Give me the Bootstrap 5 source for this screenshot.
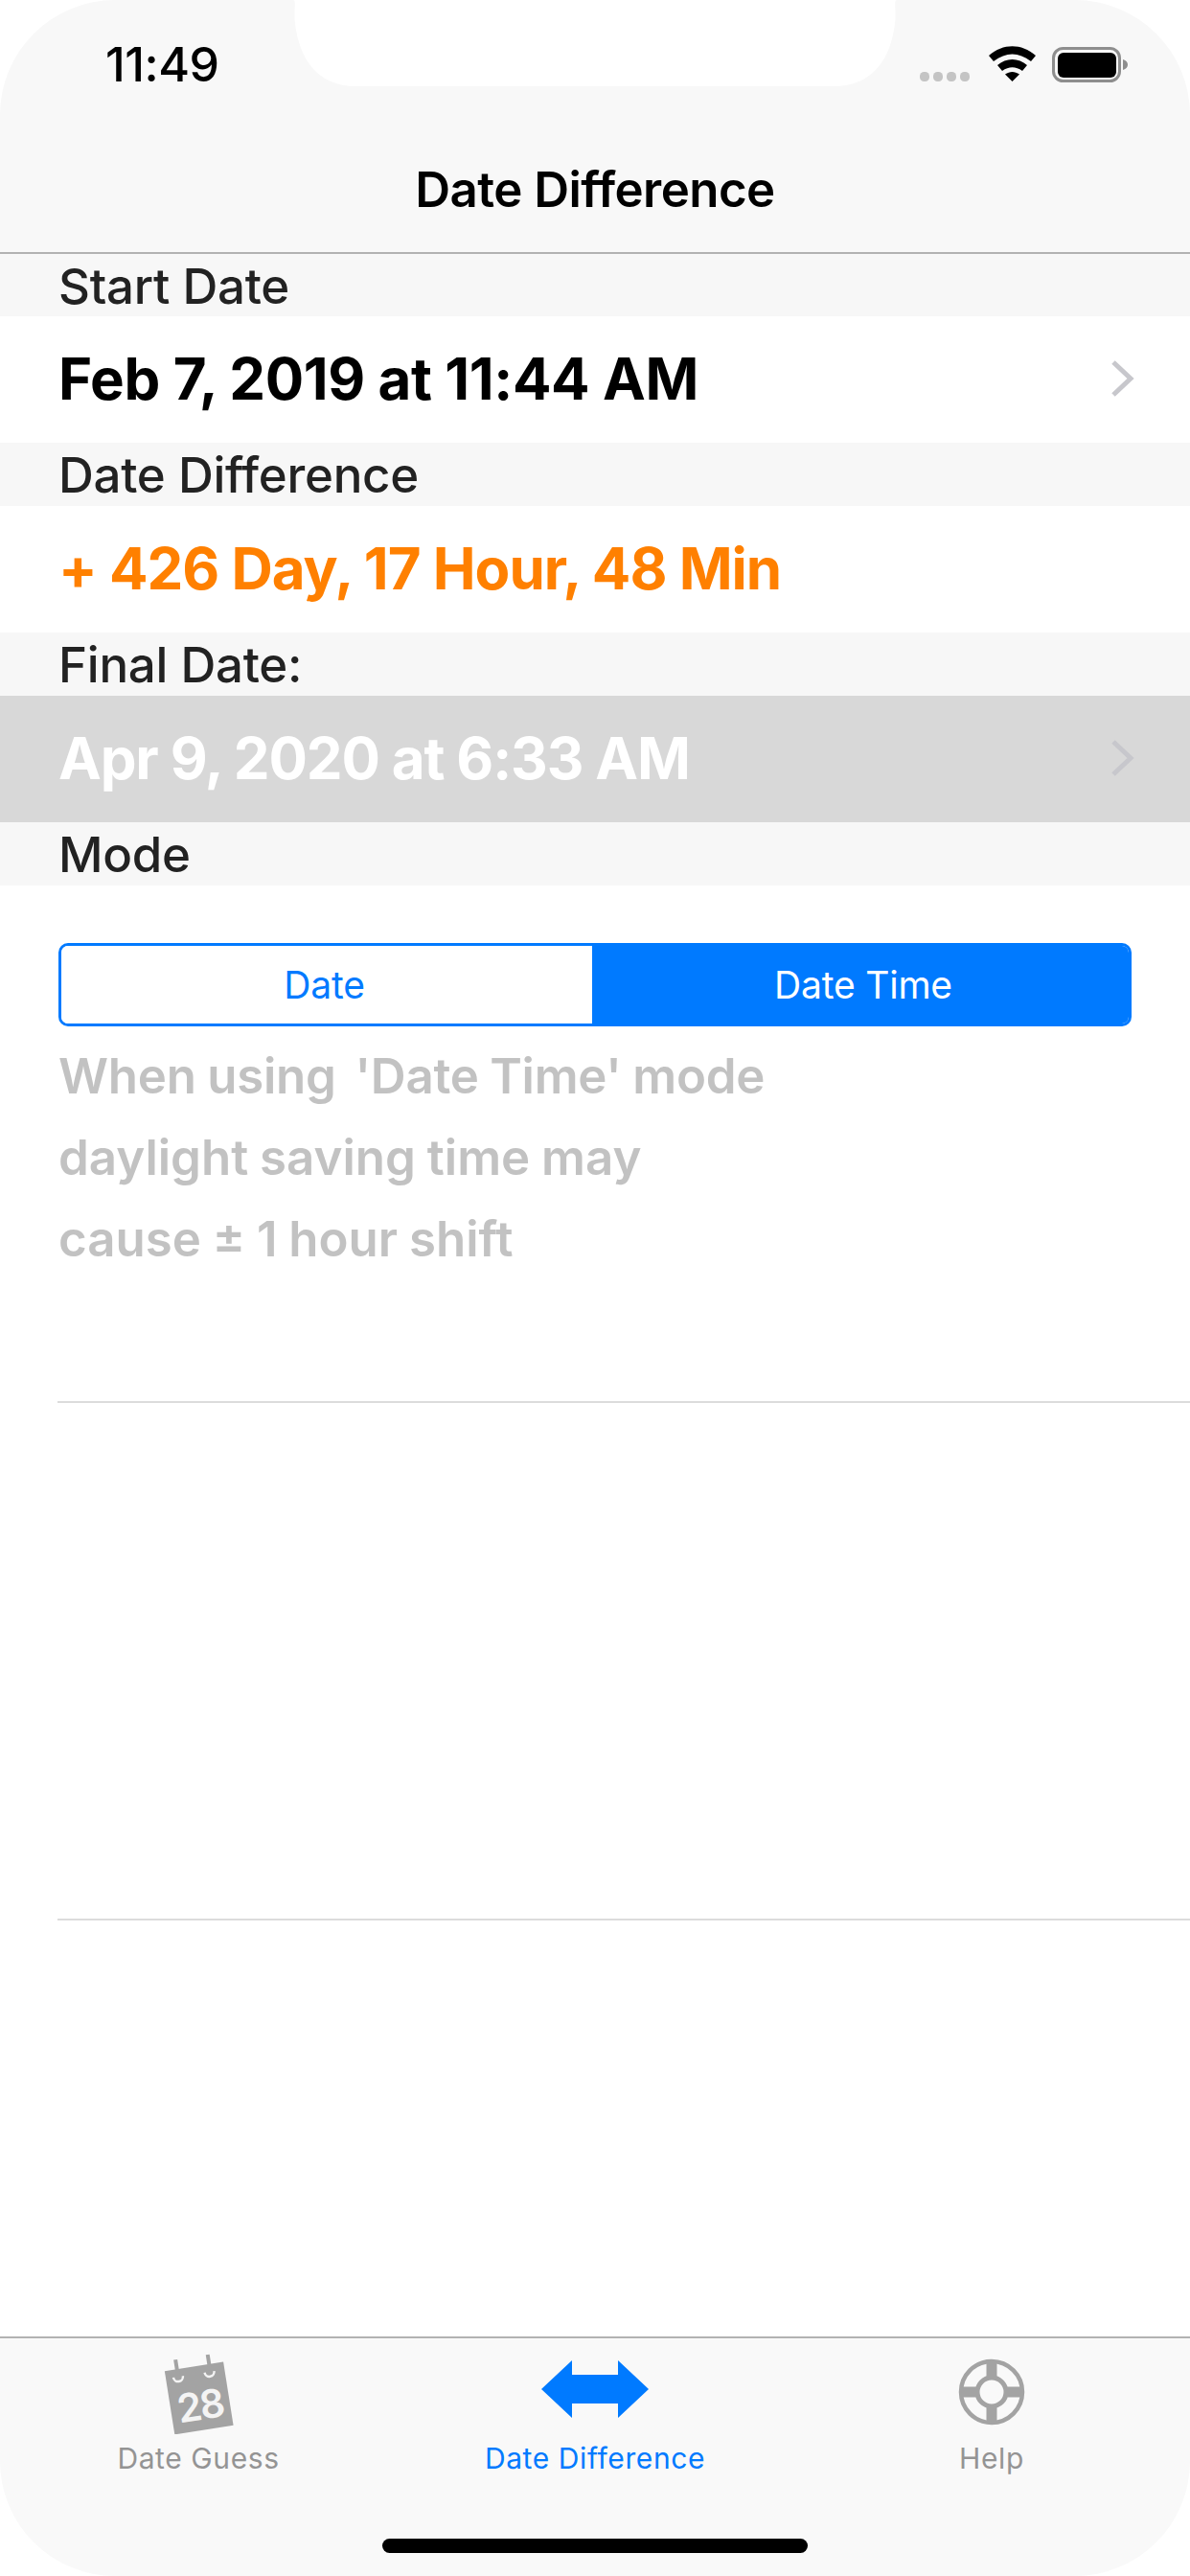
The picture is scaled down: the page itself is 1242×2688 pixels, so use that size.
<!DOCTYPE html>
<html lang="en">
<head>
<meta charset="utf-8">
<title>Date Difference</title>
<link href="https://cdn.jsdelivr.net/npm/bootstrap@5.3.0/dist/css/bootstrap.min.css" rel="stylesheet">
<style>
html,body{background:#fff;margin:0}
.phone-screen{width:1242px;height:2688px;font-family:Inter,"Liberation Sans",sans-serif;color:#000;background:#fff;position:relative;overflow:hidden}
.top-area{height:265px;background:#f8f8f8;border-bottom:2px solid #b2b2b2;border-radius:120px 120px 0 0;position:relative;flex:none}
.status-row{height:90px;padding:0 0 0 110px}
.clock{font-size:50px;font-weight:500;line-height:1;margin-top:42px;letter-spacing:-.5px}
.notch-shape{position:absolute;left:300px;top:0;width:642px;height:90px}
.status-icons{position:absolute;left:955px;top:44px}
.nav-title{height:173px;font-size:51px;font-weight:600;line-height:1;padding-top:42px;letter-spacing:-.55px}
.sec-head{height:66px;background:#f7f7f7;color:#222;font-size:51px;font-weight:500;line-height:1;padding:1px 0 0 61px;letter-spacing:-.26px;flex:none}
.sec-first{height:65px}
.val-row{height:132px;padding:0 57px 2px 61px;font-size:60px;font-weight:700;line-height:1;letter-spacing:-1px;flex:none}
.val-start{letter-spacing:-.4px}
.val-orange{color:#ff8000}
.val-picked{background:#d8d8d8;color:#fff;letter-spacing:-1.15px}
.seg-wrap{padding:60px 61px 0 61px}
.seg-box{height:87px;border:3px solid #007aff;border-radius:10px;overflow:hidden;font-size:39px;line-height:1;font-weight:400;letter-spacing:-.2px}
.seg-on{background:#007aff;color:#fff;padding-left:6px}
.seg-off{color:#007aff;background:#fff;width:554px;flex:none;padding-right:5px}
.hint-text{padding:9px 0 0 61px;color:#c2c2c2;font-size:51px;font-weight:600;letter-spacing:0;word-spacing:-1px;line-height:85px}
.hint-first{letter-spacing:-.25px}
.rule-line{height:2px;background:#dcdcdc;margin-left:60px;flex:none}
.rule-first{margin-top:127px}
.rule-second{margin-top:538px}
.tabs-area{height:250px;background:#f9f9f9;border-top:2px solid #b2b2b2;border-radius:0 0 120px 120px;flex:none;position:relative}
.tab-cell{position:relative;height:140px;width:414px}
.tab-label{font-size:30px;line-height:1;color:#949494;margin-top:auto;letter-spacing:.6px}
.tab-label-on{color:#007aff}
.icon-cal{margin-top:14px}
.icon-arrow{margin-top:23px}
.icon-help{margin-top:21px}
.home-bar{position:absolute;left:399px;top:209px;width:444px;height:15px;border-radius:8px;background:#000}
</style>
</head>
<body>
<div class="phone-screen d-flex flex-column">
  <header class="top-area d-flex flex-column">
    <div class="status-row"><div class="clock">11:49</div></div>
    <svg class="notch-shape" viewBox="0 0 642 90"><path d="M0 0H6C10 0 6 12 8 24C12 60 30 90 72 90H570C612 90 630 60 634 24C636 12 632 0 636 0H642V0Z" fill="#fff"/></svg>
    <svg class="status-icons" width="230" height="50" viewBox="0 0 230 50">
      <g fill="#c4c4c4"><rect x="5" y="31" width="10" height="10" rx="4.500"/><rect x="19" y="31" width="10" height="10" rx="4.500"/><rect x="33" y="31" width="10" height="10" rx="4.500"/><rect x="47" y="31" width="10" height="10" rx="4.500"/></g>
      <path d="M77 14C92 1 111 1 126 14L121 20C108 10 95 10 82 20Z" fill="#000"/>
      <path d="M86 24C95 16 108 16 117 24L112 30C105 25 98 25 91 30Z" fill="#000"/>
      <path d="M94 33.500C99 30 104 30 109 33.500L101.500 41Z" fill="#000"/>
      <rect x="144.500" y="6.500" width="69" height="34" rx="10" fill="none" stroke="#8e8e8e" stroke-width="3"/>
      <rect x="149" y="11" width="61" height="26" rx="6" fill="#000"/>
      <path d="M217 18C220.500 19 222 21 222 23.500C222 26 220.500 28 217 29Z" fill="#8e8e8e"/>
    </svg>
    <div class="nav-title d-flex align-items-center justify-content-center">Date Difference</div>
  </header>

  <div class="sec-head sec-first d-flex align-items-center">Start Date</div>
  <div class="val-row val-start d-flex align-items-center justify-content-between">
    <span>Feb 7, 2019 at 11:44 AM</span>
    <svg width="26" height="40" viewBox="0 0 26 40"><path d="M3 3L21 20L3 37" fill="none" stroke="#c7c7cc" stroke-width="5"/></svg>
  </div>
  <div class="sec-head d-flex align-items-center">Date Difference</div>
  <div class="val-row val-orange d-flex align-items-center">+ 426 Day, 17 Hour, 48 Min</div>
  <div class="sec-head d-flex align-items-center">Final Date:</div>
  <div class="val-row val-picked d-flex align-items-center justify-content-between">
    <span>Apr 9, 2020 at 6:33 AM</span>
    <svg width="26" height="40" viewBox="0 0 26 40"><path d="M3 3L21 20L3 37" fill="none" stroke="#c7c7cc" stroke-width="5"/></svg>
  </div>
  <div class="sec-head d-flex align-items-center">Mode</div>

  <main class="flex-grow-1 d-flex flex-column">
    <div class="seg-wrap">
      <div class="seg-box d-flex">
        <div class="seg-off d-flex align-items-center justify-content-center">Date</div>
        <div class="seg-on flex-grow-1 d-flex align-items-center justify-content-center">Date Time</div>
      </div>
    </div>
    <div class="hint-text"><span class="hint-first">When using&thinsp; 'Date Time' mode</span><br>daylight saving time may<br>cause ± 1 hour shift</div>
    <div class="rule-line rule-first"></div>
    <div class="rule-line rule-second"></div>
  </main>

  <footer class="tabs-area">
    <div class="d-flex">
      <div class="tab-cell d-flex flex-column align-items-center">
        <svg width="84" height="86" viewBox="0 0 84 86" class="icon-cal">
          <g transform="rotate(-9 42 44)">
            <rect x="11" y="15" width="62" height="67" fill="#a3a3a3"/>
            <rect x="22" y="5" width="4" height="17" fill="#a3a3a3"/>
            <rect x="56" y="5" width="4" height="17" fill="#a3a3a3"/>
            <path d="M19 23a5 5 0 0 0 10 0M52 23a5 5 0 0 0 10 0" fill="none" stroke="#f4f4f4" stroke-width="2.500"/>
            <text x="42" y="71" text-anchor="middle" font-family="Inter,sans-serif" font-size="41" font-weight="600" letter-spacing="-2" fill="#f4f4f4">28</text>
          </g>
        </svg>
        <div class="tab-label">Date Guess</div>
      </div>
      <div class="tab-cell d-flex flex-column align-items-center">
        <svg width="112" height="60" viewBox="0 0 112 60" class="icon-arrow">
          <path d="M0 30L32 0V15H80V0L112 30L80 60V45H32V60Z" fill="#007aff"/>
        </svg>
        <div class="tab-label tab-label-on">Date Difference</div>
      </div>
      <div class="tab-cell d-flex flex-column align-items-center">
        <svg width="70" height="70" viewBox="0 0 70 70" class="icon-help">
          <circle cx="35" cy="35" r="32" fill="none" stroke="#a3a3a3" stroke-width="4.500"/>
          <circle cx="35" cy="35" r="15" fill="none" stroke="#a3a3a3" stroke-width="5"/>
          <g stroke="#a3a3a3" stroke-width="11"><path d="M35 3V20M35 50V67M3 35H20M50 35H67"/></g>
        </svg>
        <div class="tab-label">Help</div>
      </div>
    </div>
    <div class="home-bar"></div>
  </footer>
</div>
<script src="https://cdn.jsdelivr.net/npm/bootstrap@5.3.0/dist/js/bootstrap.bundle.min.js"></script>
</body>
</html>
